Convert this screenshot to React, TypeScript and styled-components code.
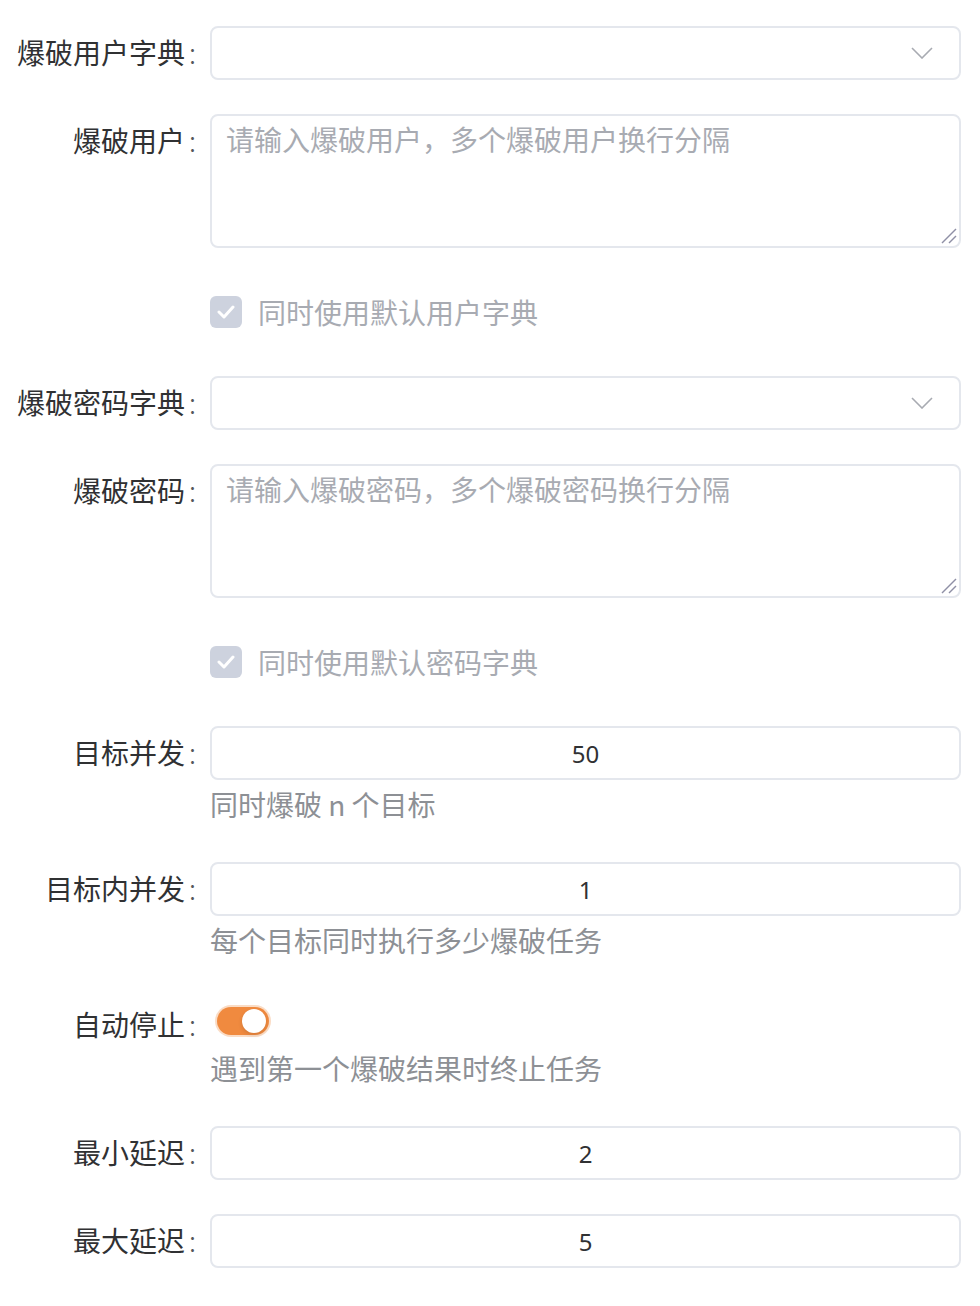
import React from 'react';
import styled, { createGlobalStyle } from 'styled-components';

const GlobalStyle = createGlobalStyle`
  body {
    margin: 0;
    background: #fff;
    font-family: "Noto Sans CJK SC", "Noto Sans", sans-serif;
  }
`;

const Form = styled.form`
  display: flex;
  flex-direction: column;
  gap: 34px;
  padding: 26px 19px 38px 0;
`;

const Item = styled.div`
  display: flex;
  align-items: flex-start;
`;

const Label = styled.label`
  width: 210px;
  flex-shrink: 0;
  box-sizing: border-box;
  padding-right: 14px;
  text-align: right;
  font-size: 28px;
  line-height: 52px;
  color: #303133;
  white-space: nowrap;
`;

const Colon = styled.span`
  margin-left: 4px;
  font-weight: 300;
  color: #55575c;
`;

const Content = styled.div`
  flex: 1;
  min-width: 0;
  display: flex;
  flex-direction: column;
`;

const Box = styled.div`
  height: 54px;
  box-sizing: border-box;
  border: 2px solid #e4e7ed;
  border-radius: 8px;
  background: #fff;
  display: flex;
  align-items: center;
`;

const SelectBox = styled(Box)`
  justify-content: flex-end;
  padding-right: 26px;
`;

const NumberInput = styled.input`
  height: 54px;
  width: 100%;
  box-sizing: border-box;
  border: 2px solid #e4e7ed;
  border-radius: 8px;
  text-align: center;
  font-family: "Noto Sans", "Noto Sans CJK SC", sans-serif;
  font-size: 24px;
  color: #303133;
  outline: none;
`;

const AreaWrap = styled.div`
  position: relative;
  height: 134px;
`;

const TextArea = styled.textarea`
  display: block;
  height: 100%;
  width: 100%;
  box-sizing: border-box;
  border: 2px solid #e4e7ed;
  border-radius: 8px;
  padding: 1px 14px;
  font-family: "Noto Sans CJK SC", sans-serif;
  font-size: 28px;
  line-height: 44px;
  color: #303133;
  resize: none;
  outline: none;
  &::placeholder {
    color: #a8abb2;
  }
`;

const Grip = styled.svg`
  position: absolute;
  right: 4px;
  bottom: 4px;
  pointer-events: none;
`;

const Help = styled.div`
  font-size: 28px;
  line-height: 48px;
  color: #8d9095;
`;

const CheckRow = styled.div`
  display: flex;
  align-items: center;
  gap: 16px;
  height: 60px;
  padding-left: 210px;
`;

const CheckMark = styled.span`
  width: 32px;
  height: 32px;
  border-radius: 6px;
  background: #cdd2de;
  display: flex;
  align-items: center;
  justify-content: center;
`;

const CheckText = styled.span`
  font-size: 28px;
  color: #a8abb2;
`;

const SwitchWrap = styled.div`
  height: 46px;
  display: flex;
  align-items: center;
  padding-left: 7px;
`;

const Switch = styled.span<{ on: boolean }>`
  width: 52px;
  height: 28px;
  border-radius: 14px;
  background: ${p => (p.on ? '#f08a3f' : '#dcdfe6')};
  box-shadow: 0 0 0 2px rgba(240, 138, 63, 0.3);
  display: flex;
  align-items: center;
  justify-content: ${p => (p.on ? 'flex-end' : 'flex-start')};
  padding: 0 3px;
  box-sizing: border-box;
`;

const Knob = styled.span`
  width: 24px;
  height: 24px;
  border-radius: 50%;
  background: #fff;
  box-shadow: 0 2px 4px rgba(0, 0, 0, 0.12);
`;

const Chevron = () => (
  <svg width="22" height="12" viewBox="0 0 22 12">
    <polyline points="1,1 11,11 21,1" fill="none" stroke="#a8abb2" strokeWidth="1.6" />
  </svg>
);

const Check = () => (
  <svg width="18" height="14" viewBox="0 0 18 14">
    <polyline points="2,7 7,12 16,2" fill="none" stroke="#fff" strokeWidth="3" strokeLinecap="round" strokeLinejoin="round" />
  </svg>
);

const Area = ({ placeholder }: { placeholder: string }) => (
  <AreaWrap>
    <TextArea placeholder={placeholder} />
    <Grip width="16" height="16" viewBox="0 0 16 16">
      <line x1="1" y1="15" x2="15" y2="1" stroke="#8f90a6" strokeWidth="1.5" />
      <line x1="8" y1="15" x2="15" y2="8" stroke="#8f90a6" strokeWidth="1.5" />
    </Grip>
  </AreaWrap>
);

const FieldLabel = ({ text }: { text: string }) => (
  <Label>
    {text}
    <Colon>:</Colon>
  </Label>
);

const App = () => {
  return (
    <>
      <GlobalStyle />
      <Form>
        <Item>
          <FieldLabel text="爆破用户字典" />
          <Content>
            <SelectBox>
              <Chevron />
            </SelectBox>
          </Content>
        </Item>
        <Item>
          <FieldLabel text="爆破用户" />
          <Content>
            <Area placeholder="请输入爆破用户，多个爆破用户换行分隔" />
          </Content>
        </Item>
        <CheckRow>
          <CheckMark><Check /></CheckMark>
          <CheckText>同时使用默认用户字典</CheckText>
        </CheckRow>
        <Item>
          <FieldLabel text="爆破密码字典" />
          <Content>
            <SelectBox>
              <Chevron />
            </SelectBox>
          </Content>
        </Item>
        <Item>
          <FieldLabel text="爆破密码" />
          <Content>
            <Area placeholder="请输入爆破密码，多个爆破密码换行分隔" />
          </Content>
        </Item>
        <CheckRow>
          <CheckMark><Check /></CheckMark>
          <CheckText>同时使用默认密码字典</CheckText>
        </CheckRow>
        <Item>
          <FieldLabel text="目标并发" />
          <Content>
            <NumberInput defaultValue="50" />
            <Help>同时爆破 n 个目标</Help>
          </Content>
        </Item>
        <Item>
          <FieldLabel text="目标内并发" />
          <Content>
            <NumberInput defaultValue="1" />
            <Help>每个目标同时执行多少爆破任务</Help>
          </Content>
        </Item>
        <Item>
          <FieldLabel text="自动停止" />
          <Content>
            <SwitchWrap>
              <Switch on>
                <Knob />
              </Switch>
            </SwitchWrap>
            <Help>遇到第一个爆破结果时终止任务</Help>
          </Content>
        </Item>
        <Item>
          <FieldLabel text="最小延迟" />
          <Content>
            <NumberInput defaultValue="2" />
          </Content>
        </Item>
        <Item>
          <FieldLabel text="最大延迟" />
          <Content>
            <NumberInput defaultValue="5" />
          </Content>
        </Item>
      </Form>
    </>
  );
};

export default App;
